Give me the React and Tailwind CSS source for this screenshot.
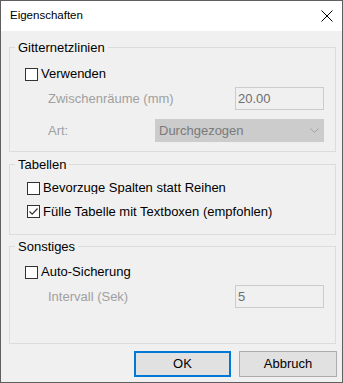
import React from 'react';

function Checkbox({ checked }) {
    return (
        <span className="flex h-[13px] w-[13px] shrink-0 items-center justify-center border border-[#333333] bg-white">
            {checked && (
                <svg width="11" height="11" viewBox="0 0 11 11">
                    <path d="M1.5 5.5 L4.2 8.2 L9.5 2.5" fill="none" stroke="#333333" strokeWidth="1.2" />
                </svg>
            )}
        </span>
    )
}

function Group({ title, className, children }) {
    return (
        <fieldset className={`ml-[8px] mr-[6px] border border-[#dcdcdc] ${className}`}>
            <legend className="ml-[5px] px-[3px] text-[13px] leading-[15px] text-black">{title}</legend>
            {children}
        </fieldset>
    )
}

function Field({ value, className }) {
    return (
        <div className={`ml-auto mr-[11px] flex h-[23px] w-[89px] items-center border border-[#cccccc] bg-[#f0f0f0] pl-[2px] text-[13px] text-[#6d6d6d] ${className}`}>
            {value}
        </div>
    )
}

export default function App() {
    return (
        <div className="flex h-[383px] w-[343px] flex-col border border-[#5f5f5f] bg-[#f0f0f0] font-['Liberation_Sans',Arial,sans-serif] text-black">
            <div className="flex h-[30px] shrink-0 items-center justify-between bg-white pl-[9px] pr-[8px]">
                <span className="text-[11.5px]">Eigenschaften</span>
                <svg width="12" height="12" viewBox="0 0 12 12" className="mr-[1px]">
                    <path d="M0.5 0.5 L11.5 11.5 M11.5 0.5 L0.5 11.5" stroke="#000" strokeWidth="1" />
                </svg>
            </div>

            <Group title="Gitternetzlinien" className="mt-[9px] pb-[9px]">
                <div className="mt-[12px] flex h-[14px] items-center pl-[15px]">
                    <Checkbox />
                    <span className="ml-[3px] text-[13px]">Verwenden</span>
                </div>
                <div className="mt-[6px] flex h-[23px] items-center pl-[38px]">
                    <span className="w-[125px] overflow-hidden whitespace-nowrap text-[13px] text-[#a0a0a0]">Zwischenräume (mm)</span>
                    <Field value="20.00" />
                </div>
                <div className="mt-[9px] flex h-[23px] items-center pl-[38px]">
                    <span className="text-[13px] text-[#a0a0a0]">Art:</span>
                    <div className="ml-auto mr-[11px] flex h-[23px] w-[169px] items-center justify-between bg-[#cccccc] pl-[4px] pr-[5px] text-[13px] text-[#7a7a7a]">
                        <span>Durchgezogen</span>
                        <svg width="9" height="5" viewBox="0 0 9 5">
                            <path d="M0.5 0.5 L4.5 4.5 L8.5 0.5" fill="none" stroke="#a0a0a0" strokeWidth="1" />
                        </svg>
                    </div>
                </div>
            </Group>

            <Group title="Tabellen" className="mt-[5px] pb-[16px]">
                <div className="mt-[10px] flex h-[13px] items-start pl-[17px]">
                    <Checkbox />
                    <span className="ml-[3px] block h-[12px] overflow-hidden text-[13px] leading-[12px]">Bevorzuge Spalten statt Reihen</span>
                </div>
                <div className="mt-[10px] flex h-[13px] items-center pl-[17px]">
                    <Checkbox checked />
                    <span className="ml-[3px] text-[13px]">Fülle Tabelle mit Textboxen (empfohlen)</span>
                </div>
            </Group>

            <Group title="Sonstiges" className="mt-[4px] pb-[35px]">
                <div className="mt-[11px] flex h-[14px] items-center pl-[15px]">
                    <Checkbox />
                    <span className="ml-[3px] text-[13px]">Auto-Sicherung</span>
                </div>
                <div className="mt-[6px] flex h-[23px] items-center pl-[38px]">
                    <span className="text-[13px] text-[#a0a0a0]">Intervall (Sek)</span>
                    <Field value="5" />
                </div>
            </Group>

            <div className="mr-[5px] mt-[7px] flex justify-end gap-[8px]">
                <button className="h-[26px] w-[97px] border-2 border-[#0078d7] bg-[#e1e1e1] text-[13px]">OK</button>
                <button className="h-[26px] w-[98px] border border-[#adadad] bg-[#e1e1e1] text-[13px]">Abbruch</button>
            </div>
        </div>
    )
}
